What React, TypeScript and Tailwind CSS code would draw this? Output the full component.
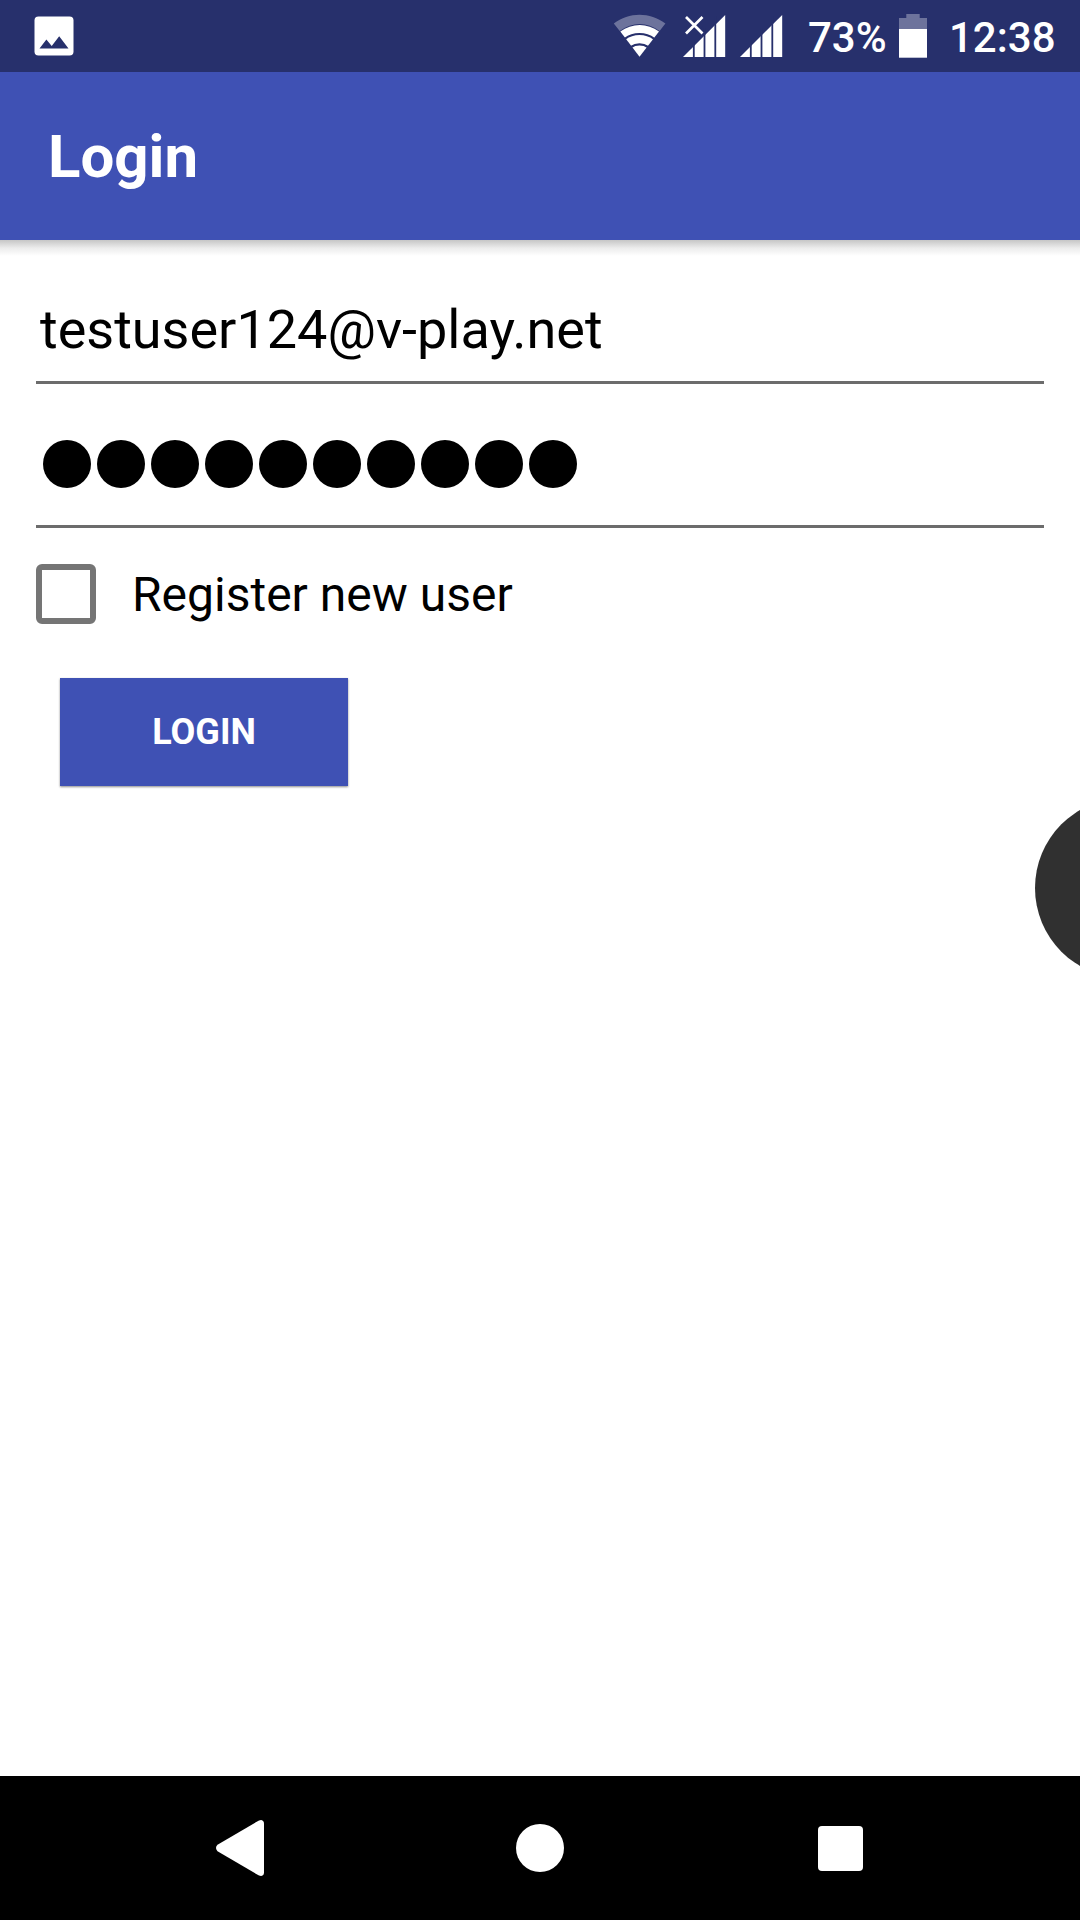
import React from "react";

const PASSWORD_LENGTH = 10;

function PictureIcon() {
  return (
    <svg className="h-[72px] w-[44px]" viewBox="32 0 44 72">
      <rect x="34.5" y="16.5" width="39" height="39" rx="4" fill="#fff" />
      <path d="M39.5 48.6 46.4 39.6 51.7 45.9 59.2 36.2 68.5 48.6Z" fill="#27306c" />
    </svg>
  );
}

function WifiIcon() {
  return (
    <svg className="h-[72px] w-[54px]" viewBox="612 0 54 72">
      <path d="M613.8 23.6C629 11.8 650 11.8 665.4 23.6L659.6 31C647 21.5 632.5 21.5 619.7 31Z" fill="#6d739c" />
      <path d="M620.3 31.5C632 22.8 647.5 22.8 659 31.5L639.5 56.7Z" fill="#fff" />
      <path d="M624.8 38.8C633.5 32.4 645.5 32.4 654.2 38.8" fill="none" stroke="#27306c" strokeWidth="2.2" />
      <path d="M631 47C636 43.4 643 43.4 648 47" fill="none" stroke="#27306c" strokeWidth="2.2" />
    </svg>
  );
}

function SignalIcon({ missing = false }: { missing?: boolean }) {
  return (
    <svg className="h-[72px] w-[43px]" viewBox="0 0 43 72">
      <path d="M0 57 42.2 15V57Z" fill="#fff" />
      <path d="M10.8 40V57M21.5 28V57M32.3 16V57" stroke="#27306c" strokeWidth="1.8" />
      {missing && (
        <>
          <path d="M0 14H20V26L12 36H0Z" fill="#27306c" />
          <path d="M3 17 19.5 33.5M19.5 17 3 33.5" stroke="#fff" strokeWidth="2.7" />
        </>
      )}
    </svg>
  );
}

function BatteryIcon() {
  return (
    <svg className="h-[72px] w-[28px]" viewBox="0 0 28 72">
      <path d="M7.3 14H20.7V18H28V29H0V18H7.3Z" fill="#6d739c" />
      <rect y="29" width="28" height="28.7" fill="#fff" />
    </svg>
  );
}

function StatusBar() {
  return (
    <header className="flex h-[72px] shrink-0 items-center bg-[#27306c] text-[42px] leading-[72px] font-medium text-white">
      <div className="ml-8">
        <PictureIcon />
      </div>
      <div className="ml-auto flex items-center">
        <WifiIcon />
        <div className="ml-[17px]">
          <SignalIcon missing />
        </div>
        <div className="ml-[14px]">
          <SignalIcon />
        </div>
        <span className="ml-[25px] w-[80px] pt-1 whitespace-nowrap">73%</span>
        <div className="ml-[11px]">
          <BatteryIcon />
        </div>
        <span className="ml-[22px] w-[131px] pt-1 whitespace-nowrap">12:38</span>
      </div>
    </header>
  );
}

function NavigationBar() {
  return (
    <nav className="flex h-[144px] shrink-0 items-center justify-center gap-[252px] bg-black">
      <svg className="h-[56px] w-[48px]" viewBox="0 0 48 56" fill="#fff">
        <path d="M1.5 24.8 42.5 .7Q44 0 45.2 0Q48 .5 48 3.5V52.5Q48 55.5 45.2 56Q44 56 42.5 55.3L1.5 31.2Q-1.5 28 1.5 24.8Z" />
      </svg>
      <div className="size-12 rounded-full bg-white" />
      <div className="flex size-12 items-center justify-center">
        <div className="size-[45px] rounded-[4px] bg-white" />
      </div>
    </nav>
  );
}

export default function App() {
  return (
    <div className="relative flex h-[1920px] w-[1080px] flex-col overflow-hidden bg-white font-['Roboto',sans-serif] text-black">
      <StatusBar />
      <div className="flex h-[168px] shrink-0 items-center bg-[#3f51b4] pt-[2px] pl-12">
        <h1 className="text-[60px] leading-[70px] font-bold text-white">Login</h1>
      </div>
      <div className="h-[16px] shrink-0 bg-linear-to-b from-[#c6c6c6] via-[#ececec] to-white" />

      <main className="flex flex-1 flex-col px-9">
        <div className="flex h-[128px] items-center border-b-[3px] border-[#6c6c6c] pt-[22px] pl-[4px] text-[54px] leading-[64px]">
          testuser124@v-play.net
        </div>
        <div className="flex h-[144px] items-start gap-[6px] border-b-[3px] border-[#6c6c6c] pt-[56px] pl-[7px]">
          {Array.from({ length: PASSWORD_LENGTH }, (_, i) => (
            <span key={i} className="size-12 rounded-full bg-black" />
          ))}
        </div>
        <label className="mt-9 flex h-[60px] items-center">
          <span className="size-[60px] rounded-[6px] border-6 border-[#757575]" />
          <span className="ml-9 pt-[2px] text-[48px] leading-[60px]">Register new user</span>
        </label>
        <button className="mt-[54px] ml-6 h-[108px] w-[288px] self-start bg-[#3f51b4] text-[36px] leading-[42px] font-bold text-white shadow-[0_1px_2px_rgba(0,0,0,0.45)]">
          LOGIN
        </button>
      </main>

      <NavigationBar />
      <div className="absolute top-[798px] left-[1035px] size-[180px] rounded-full bg-[#303030]" />
    </div>
  );
}
